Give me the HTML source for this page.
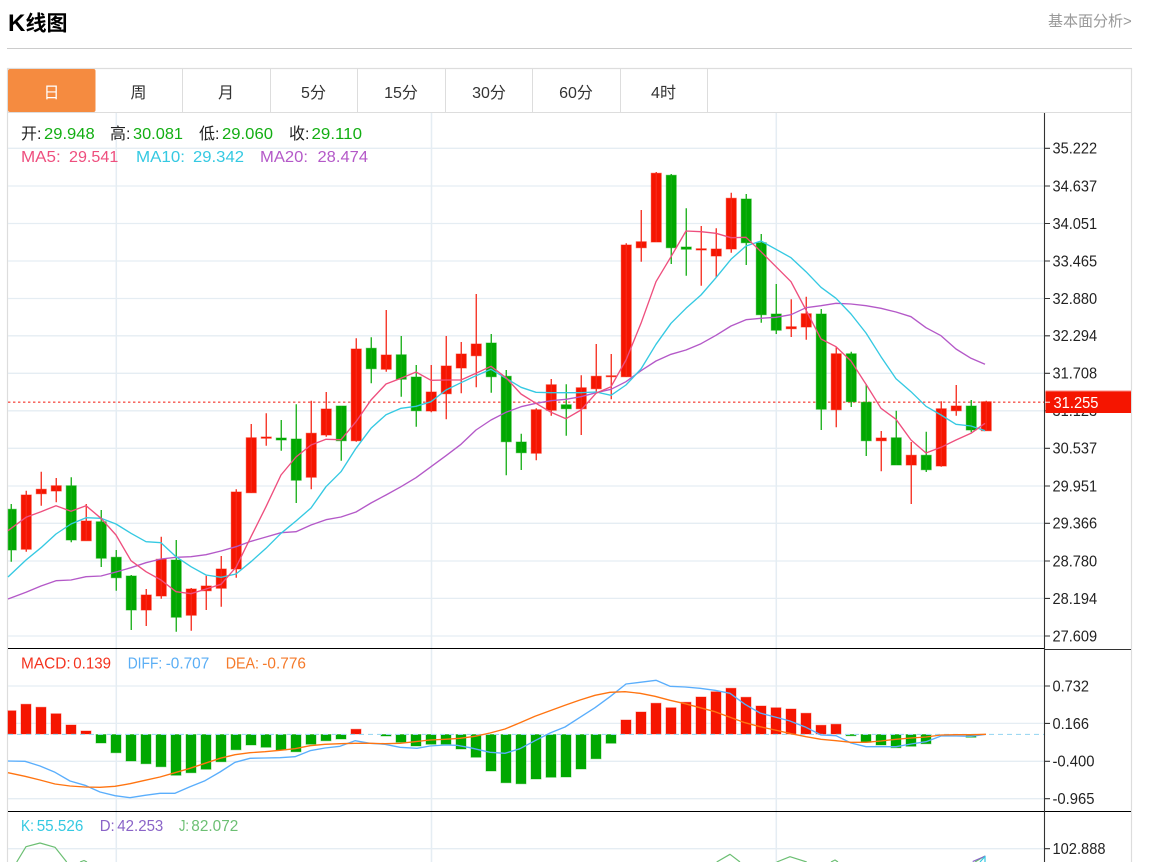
<!DOCTYPE html>
<html lang="zh">
<head>
<meta charset="utf-8">
<title>K线图</title>
<style>
html,body{margin:0;padding:0;background:#fff;width:1162px;height:862px;overflow:hidden}
svg{display:block;font-family:"Liberation Sans","Noto Sans CJK SC",sans-serif}
.ax text{font-size:15.5px;fill:#222}
.tab text{font-size:16px;fill:#333;text-anchor:middle}
.l{font-size:16px}
</style>
</head>
<body>
<svg width="1162" height="862" viewBox="0 0 1162 862" xmlns="http://www.w3.org/2000/svg">
<!-- header -->
<text x="8" y="31" font-size="24" font-weight="700" fill="#000">K</text>
<text x="25.5" y="30.5" font-size="21" font-weight="700" fill="#000">线图</text>
<text x="1048" y="26" font-size="15" fill="#999">基本面分析&gt;</text>
<path d="M7 48.5H1132" stroke="#ccc" stroke-width="1"/>

<!-- frame -->
<path d="M7.5 862V68.5H1131.5V862" fill="none" stroke="#ddd" stroke-width="1.2"/>
<path d="M8 112.5H1131" stroke="#ddd" stroke-width="1"/>
<rect x="8" y="69" width="87.5" height="43" rx="2" fill="#f58b40"/>
<path d="M182.5 69V112M270.5 69V112M357.5 69V112M445.5 69V112M532.5 69V112M620.5 69V112M707.5 69V112" stroke="#ddd" stroke-width="1"/>
<g class="tab">
<text x="51.5" y="98" style="fill:#fff">日</text>
<text x="138.5" y="98">周</text>
<text x="226" y="98">月</text>
<text x="313.5" y="98">5分</text>
<text x="401" y="98">15分</text>
<text x="489" y="98">30分</text>
<text x="576" y="98">60分</text>
<text x="663.5" y="98">4时</text>
</g>

<!-- grid -->
<g stroke="#e5edf3" stroke-width="1.3" fill="none">
<path d="M8 148.3H1044M8 186H1044M8 223.5H1044M8 261H1044M8 298.5H1044M8 335.8H1044M8 373.3H1044M8 410.8H1044M8 448.3H1044M8 486H1044M8 523.3H1044M8 561H1044M8 598.4H1044M8 636H1044"/>
<path d="M8 686H1044M8 723.4H1044M8 761.3H1044M8 798.7H1044M8 848.7H1044"/>
<path d="M116.3 113V862M431.5 113V862M776.3 113V862" stroke-width="1.5"/>
</g>

<!-- price line -->
<path d="M8 402.2H1044" stroke="#f6564e" stroke-width="1.4" stroke-dasharray="2.4 2.6"/>

<!-- candles -->
<g transform="translate(.25 0)">
<g fill="#f51500" stroke="#f51500" stroke-opacity=".55" stroke-width="1">
<path d="M21 495h10V549.3h-10zM36 489.3h10V493.7h-10zM51 485.7h10V491h-10zM81 521h10V540.7h-10zM141 595h10V610h-10zM156 559.3h10V596h-10zM186 589h10V615.3h-10zM201 586h10V590.7h-10zM216 569h10V588.3h-10zM231 492h10V569h-10zM246 437.7h10V492.7h-10zM261 437h10V438.3h-10zM306 433.3h10V477.3h-10zM321 409h10V435h-10zM351 349h10V440.7h-10zM381 355h10V369.3h-10zM426 392h10V411h-10zM441 366h10V393.7h-10zM456 354h10V368h-10zM471 344h10V355.7h-10zM531 409.7h10V453.3h-10zM546 384.7h10V410.3h-10zM576 387.7h10V408.7h-10zM591 376.3h10V388.7h-10zM606 375.7h10V376.7h-10zM621 245h10V376.7h-10zM636 241.7h10V247.7h-10zM651 173.3h10V242h-10zM696 248.7h10V250h-10zM711 249h10V256h-10zM726 198.3h10V249h-10zM786 326.7h10V328.7h-10zM801 313.7h10V327h-10zM831 353.7h10V409.7h-10zM876 438h10V440.7h-10zM906 455.3h10V465h-10zM936 408.7h10V466h-10zM951 406h10V410.7h-10zM981 401.7h10V430.7h-10z"/>
</g>
<path fill="none" stroke="#f6281a" stroke-width="1.3" d="M26 490.7V551.7M41 471.7V505.7M56 478V502.3M86 504V540.7M146 589V626M161 536.7V598.7M191 588V630.7M206 575.7V610M221 556V606.7M236 489.3V577.7M251 424V493M266 413.3V445.7M311 400.7V489.3M326 392V436.7M356 338.3V441.7M386 310V371.7M431 365V412.3M446 336V419.3M461 342V393.3M476 294V387.3M536 408.3V460.3M551 379V415.7M581 375.3V435M596 344V392.3M611 354V399.3M626 243.3V377M641 210V261.7M656 172V242M701 226V285.7M716 228.3V277.3M731 192.7V252.7M791 299.3V337M806 296.7V339.7M836 346.7V427.3M881 431V471.3M911 442V504M941 401.3V466.7M956 385V415.7M986 400.7V430.7"/>
<g fill="#00a800" stroke="#00a800" stroke-opacity=".5" stroke-width="1">
<path d="M8 509.3h8V550h-8zM66 485.7h10V540h-10zM96 521.7h10V558.3h-10zM111 557.3h10V577.7h-10zM126 576h10V610h-10zM171 560h10V617.3h-10zM276 438h10V440h-10zM291 439h10V480.3h-10zM336 406h10V440.7h-10zM366 348.3h10V368.7h-10zM396 354.7h10V379.3h-10zM411 377h10V410.7h-10zM486 343h10V376.7h-10zM501 376.3h10V441.7h-10zM516 442h10V452.7h-10zM561 404.7h10V408.7h-10zM666 175.3h10V247.7h-10zM681 247h10V249.3h-10zM741 199h10V242.7h-10zM756 242.7h10V314.7h-10zM771 314h10V330.3h-10zM816 314h10V409.3h-10zM846 353.7h10V401.7h-10zM861 402.3h10V440.7h-10zM891 437.7h10V465h-10zM921 455.3h10V469.7h-10zM966 406h10V430h-10z"/>
</g>
<path fill="none" stroke="#12ad12" stroke-width="1.3" d="M11 504V561.7M71 477.3V542.3M101 510V567M116 550V590.7M131 575V630M176 540V631.7M281 420V450.7M296 404.3V503M341 406V460.7M371 337.3V383.3M401 336V396.7M416 365V426.7M491 334V392.7M506 370V475.3M521 433.7V470M566 384.3V435.7M671 174V264M686 208.3V275.7M746 194V265M761 234V322.7M776 284V334M821 309V430M851 351.7V407M866 384.3V456M896 410.7V465M926 431.7V472M971 400V432.3"/>
</g>

<!-- MA lines -->
<g fill="none" stroke-width="1.35" stroke-linejoin="round">
<polyline stroke="#b459c8" points="8,599 26,592.3 41,586 56,580.7 71,580 86,576.7 101,576 116,572 131,567.7 146,562.7 161,559 176,557.3 191,556.7 206,554.7 221,551 236,546.7 251,541.3 266,537 281,532.7 296,531.7 311,525 326,519.7 341,517 356,512 371,503 386,495 401,486.7 416,477.7 431,466.7 446,455.7 461,444.3 476,430 491,420 506,412.3 521,406.7 536,403.3 551,400.7 566,399.3 581,396.7 596,392.7 611,389.3 626,381.7 641,370.7 656,361 671,354.3 686,350 701,343.7 716,335.3 731,326 746,319.7 761,318.3 776,317.3 791,314.7 806,307.7 821,305.7 836,303.3 851,304 866,305.7 881,308.3 896,312 911,316.7 926,327.7 941,335.7 956,349 971,358.3 985,364.3"/>
<polyline stroke="#35c9e2" points="8,577 26,560 41,547.7 56,534 71,524 86,517.7 101,518.3 116,524 131,533.3 146,541.7 161,542.7 176,556.7 191,566.7 206,575 221,577.3 236,574 251,561.7 266,548.3 281,533.3 296,521 311,508 326,486.7 341,471.7 356,448.3 371,428.3 386,414.7 401,408.3 416,406.3 431,401.7 446,390 461,382.7 476,375.7 491,369.3 506,378.3 521,387.3 536,392.3 551,392.7 566,392.7 581,392.7 596,392 611,395.3 626,385 641,369 656,344.3 671,323.3 686,308.3 701,295 716,277.7 731,259.3 746,246 761,241 776,249.3 791,257.7 806,271.7 821,287.3 836,298.3 851,314 866,333 881,356.7 896,378.7 911,391.7 926,406.3 941,415 956,424.3 971,426 985,430.7"/>
<polyline stroke="#ee4f7e" points="8,530.7 26,517.3 41,511.7 56,505.7 71,511.3 86,505.7 101,518.3 116,535 131,560.7 146,571.7 161,580 176,591.7 191,593.7 206,589 221,584.3 236,567.3 251,536.7 266,506.7 281,475 296,457 311,445 326,439.3 341,439.7 356,421.7 371,400 386,384 401,378.3 416,372 431,380.3 446,380 461,380 476,373.3 491,366.3 506,377.7 521,394 536,403.3 551,412.3 566,418.7 581,410 596,393.3 611,386.7 626,360 641,323.3 656,281.7 671,256.7 686,231 701,231.7 716,233.3 731,237.7 746,237.3 761,251.7 776,266.7 791,281.7 806,310 821,339 836,346.7 851,361 866,384.3 881,408.3 896,419.3 911,440 926,453 941,447.3 956,440 971,433.3 985,423.3"/>
</g>

<!-- MACD bars -->
<path fill="#f51500" stroke="#f51500" stroke-opacity=".4" stroke-width="1" d="M8 710.7h8V734h-8zM21 704.3h10V734h-10zM36 707.3h10V734h-10zM51 713.7h10V734h-10zM66 725h10V734h-10zM81 731h10V734h-10zM351 729.3h10V734h-10zM621 720h10V734h-10zM636 712h10V734h-10zM651 703.3h10V734h-10zM666 707.7h10V734h-10zM681 702.3h10V734h-10zM696 697h10V734h-10zM711 691.7h10V734h-10zM726 688.3h10V734h-10zM741 697.3h10V734h-10zM756 706h10V734h-10zM771 707.7h10V734h-10zM786 709h10V734h-10zM801 713.3h10V734h-10zM816 725.3h10V734h-10zM831 724.3h10V734h-10z"/>
<path fill="#00a800" stroke="#00a800" stroke-opacity=".4" stroke-width="1" d="M96 734.5h10V743h-10zM111 734.5h10V752.7h-10zM126 734.5h10V761h-10zM141 734.5h10V763.7h-10zM156 734.5h10V766.7h-10zM171 734.5h10V775.3h-10zM186 734.5h10V772.7h-10zM201 734.5h10V769.3h-10zM216 734.5h10V761.7h-10zM231 734.5h10V749.7h-10zM246 734.5h10V745h-10zM261 734.5h10V747.3h-10zM276 734.5h10V750h-10zM291 734.5h10V751.7h-10zM306 734.5h10V744.3h-10zM321 734.5h10V740.7h-10zM336 734.5h10V739h-10zM381 734.5h10V736h-10zM396 734.5h10V742.3h-10zM411 734.5h10V746h-10zM426 734.5h10V744.3h-10zM441 734.5h10V744.3h-10zM456 734.5h10V749h-10zM471 734.5h10V757.3h-10zM486 734.5h10V771h-10zM501 734.5h10V782.7h-10zM516 734.5h10V783.7h-10zM531 734.5h10V779h-10zM546 734.5h10V777.3h-10zM561 734.5h10V777h-10zM576 734.5h10V769h-10zM591 734.5h10V758.7h-10zM606 734.5h10V743.3h-10zM846 734.5h10V735.7h-10zM861 734.5h10V742.3h-10zM876 734.5h10V745h-10zM891 734.5h10V747.7h-10zM906 734.5h10V746.3h-10zM921 734.5h10V743.7h-10zM966 734.5h10V737.3h-10z"/>
<path d="M8 734.4H1044" stroke="#9ed9f2" stroke-width="1.1" stroke-dasharray="5 4" fill="none"/>
<g fill="none" stroke-width="1.35" stroke-linejoin="round">
<polyline stroke="#5aaefc" points="8,761 25,761.3 40,766 55,772.3 70,781 85,785.3 100,792 115,795.7 130,797.7 145,795.3 160,793.3 175,793.3 190,786.7 205,780.7 220,772 235,762.3 250,758.3 265,758 280,757.7 295,756.7 310,750.7 325,748 340,746.3 355,740.7 370,743.3 385,744.3 400,747.3 417,748.3 430,746 445,745 457,745.3 470,747.7 490,752.3 505,753.3 520,748.7 535,740.7 550,733 565,727 580,717.3 595,707.7 610,696.7 626,684 640,682.3 656,680.3 670,686.3 685,687 700,688.3 715,690.3 730,693.3 745,704.3 760,713 775,717 790,721 800,725 806,727.3 821,735 836,735.7 851,743 866,746.7 881,746.7 896,746.7 911,744 926,741.7 941,736 956,736 971,736.3 986,734.3"/>
<polyline stroke="#ff7411" points="8,772.7 25,776.3 40,780 55,784 70,786 85,787 100,787.3 115,786.3 130,783.7 145,780.3 160,777 175,772.7 190,768.3 205,763.3 220,758.3 235,754.7 250,752.7 265,751.7 280,750.3 295,748.7 310,745.7 325,744.3 340,743.7 355,743.3 370,743.3 385,743.7 400,743.3 415,741.7 430,740 445,739.3 460,738.3 475,736.3 490,733 505,729 520,722.7 535,716.3 550,710.7 565,705.3 580,700 595,695.3 610,692.3 625,691.7 640,693.3 655,696.3 670,700.3 685,703.7 700,707.7 715,711.7 730,717.3 745,722.7 760,726.7 775,730 791,733.7 806,736.7 821,739.3 836,740.7 851,742.3 866,742.3 881,741 896,739.3 911,738 926,737 941,735 956,734.7 971,734.7 986,734.3"/>
</g>

<!-- KDJ lines -->
<g fill="none" stroke-width="1.2" stroke-linejoin="round">
<path stroke="#6cbf73" d="M16.7 862L26 846.7L40 843L55 847.3L66.7 862M80 862L84 860.5L87 862M716.7 862L730 854.3L740 862M776.7 862L790 856.7L806.7 862M831 862L835 860L838 862M975 862L985 856"/>
<path stroke="#8a64c8" d="M972.7 861.5L985.5 856"/>
<path stroke="#35c9e2" d="M980 862L985 856.5V862"/>
</g>

<!-- axes and pane dividers -->
<path d="M8 648.5H1044M8 811.5H1131" stroke="#000" stroke-width="1.1" fill="none"/>
<path d="M1044 649.5H1131" stroke="#333" stroke-width="1.1" fill="none"/>
<path d="M1044.5 113V862" stroke="#333" stroke-width="1.1" fill="none"/>
<path stroke="#333" stroke-width="1.1" fill="none" d="M1045 148.3h5M1045 186h5M1045 223.5h5M1045 261h5M1045 298.5h5M1045 335.8h5M1045 373.3h5M1045 410.8h5M1045 448.3h5M1045 486h5M1045 523.3h5M1045 561h5M1045 598.4h5M1045 636h5M1045 686h5M1045 723.4h5M1045 761.3h5M1045 798.7h5M1045 848.7h5"/>
<g class="ax">
<text x="1052.5" y="153.7" textLength="44.7" lengthAdjust="spacingAndGlyphs">35.222</text>
<text x="1052.5" y="191.4" textLength="44.7" lengthAdjust="spacingAndGlyphs">34.637</text>
<text x="1052.5" y="228.9" textLength="44.7" lengthAdjust="spacingAndGlyphs">34.051</text>
<text x="1052.5" y="266.4" textLength="44.7" lengthAdjust="spacingAndGlyphs">33.465</text>
<text x="1052.5" y="303.9" textLength="44.7" lengthAdjust="spacingAndGlyphs">32.880</text>
<text x="1052.5" y="341.2" textLength="44.7" lengthAdjust="spacingAndGlyphs">32.294</text>
<text x="1052.5" y="378.7" textLength="44.7" lengthAdjust="spacingAndGlyphs">31.708</text>
<text x="1052.5" y="416.2" textLength="44.7" lengthAdjust="spacingAndGlyphs">31.123</text>
<text x="1052.5" y="453.7" textLength="44.7" lengthAdjust="spacingAndGlyphs">30.537</text>
<text x="1052.5" y="491.4" textLength="44.7" lengthAdjust="spacingAndGlyphs">29.951</text>
<text x="1052.5" y="528.7" textLength="44.7" lengthAdjust="spacingAndGlyphs">29.366</text>
<text x="1052.5" y="566.4" textLength="44.7" lengthAdjust="spacingAndGlyphs">28.780</text>
<text x="1052.5" y="603.8" textLength="44.7" lengthAdjust="spacingAndGlyphs">28.194</text>
<text x="1052.5" y="641.4" textLength="44.7" lengthAdjust="spacingAndGlyphs">27.609</text>
<text x="1052.5" y="691.4" textLength="36.5" lengthAdjust="spacingAndGlyphs">0.732</text>
<text x="1052.5" y="728.8" textLength="36.5" lengthAdjust="spacingAndGlyphs">0.166</text>
<text x="1052.5" y="766.7" textLength="42" lengthAdjust="spacingAndGlyphs">-0.400</text>
<text x="1052.5" y="804.1" textLength="42" lengthAdjust="spacingAndGlyphs">-0.965</text>
<text x="1052.5" y="854.1" textLength="53" lengthAdjust="spacingAndGlyphs">102.888</text>
</g>
<rect x="1045.5" y="391" width="85.5" height="22" fill="#f51500"/>
<path d="M1045.5 391H1131" stroke="#f98a80" stroke-width="1" fill="none"/>
<path d="M1045 402.2h5" stroke="#fff" stroke-width="1" fill="none"/>
<text x="1053.5" y="407.8" font-size="15.5" fill="#fff" textLength="45" lengthAdjust="spacingAndGlyphs">31.255</text>

<!-- legends -->
<g class="l">
<text x="21" y="139" fill="#222">开:</text>
<text x="44" y="139" fill="#12ae12" textLength="50.7" lengthAdjust="spacingAndGlyphs">29.948</text>
<text x="110" y="139" fill="#222">高:</text>
<text x="133" y="139" fill="#12ae12" textLength="50" lengthAdjust="spacingAndGlyphs">30.081</text>
<text x="199" y="139" fill="#222">低:</text>
<text x="222" y="139" fill="#12ae12" textLength="51" lengthAdjust="spacingAndGlyphs">29.060</text>
<text x="289" y="139" fill="#222">收:</text>
<text x="311.5" y="139" fill="#12ae12" textLength="50.5" lengthAdjust="spacingAndGlyphs">29.110</text>

<text x="21" y="162" fill="#ee4f7e" textLength="39.7" lengthAdjust="spacingAndGlyphs">MA5:</text>
<text x="69" y="162" fill="#ee4f7e" textLength="49.3" lengthAdjust="spacingAndGlyphs">29.541</text>
<text x="136" y="162" fill="#35c9e2" textLength="49" lengthAdjust="spacingAndGlyphs">MA10:</text>
<text x="193" y="162" fill="#35c9e2" textLength="51" lengthAdjust="spacingAndGlyphs">29.342</text>
<text x="260" y="162" fill="#b459c8" textLength="48" lengthAdjust="spacingAndGlyphs">MA20:</text>
<text x="317.5" y="162" fill="#b459c8" textLength="50.5" lengthAdjust="spacingAndGlyphs">28.474</text>

<text x="21" y="668.3" fill="#f4331f" textLength="49.7" lengthAdjust="spacingAndGlyphs">MACD:</text>
<text x="73.3" y="668.3" fill="#f4331f" textLength="37.7" lengthAdjust="spacingAndGlyphs">0.139</text>
<text x="127.7" y="668.3" fill="#5aaef5" textLength="34.6" lengthAdjust="spacingAndGlyphs">DIFF:</text>
<text x="165.7" y="668.3" fill="#5aaef5" textLength="43.6" lengthAdjust="spacingAndGlyphs">-0.707</text>
<text x="225.7" y="668.3" fill="#f57a2a" textLength="33.3" lengthAdjust="spacingAndGlyphs">DEA:</text>
<text x="262.3" y="668.3" fill="#f57a2a" textLength="43.7" lengthAdjust="spacingAndGlyphs">-0.776</text>

<text x="21" y="831" fill="#35c9e2" textLength="13" lengthAdjust="spacingAndGlyphs">K:</text>
<text x="36.7" y="831" fill="#35c9e2" textLength="46.6" lengthAdjust="spacingAndGlyphs">55.526</text>
<text x="99.7" y="831" fill="#8a64c8" textLength="15" lengthAdjust="spacingAndGlyphs">D:</text>
<text x="117.3" y="831" fill="#8a64c8" textLength="46" lengthAdjust="spacingAndGlyphs">42.253</text>
<text x="179" y="831" fill="#6cbf73" textLength="10" lengthAdjust="spacingAndGlyphs">J:</text>
<text x="191.3" y="831" fill="#6cbf73" textLength="47" lengthAdjust="spacingAndGlyphs">82.072</text>
</g>
</svg>
</body>
</html>
